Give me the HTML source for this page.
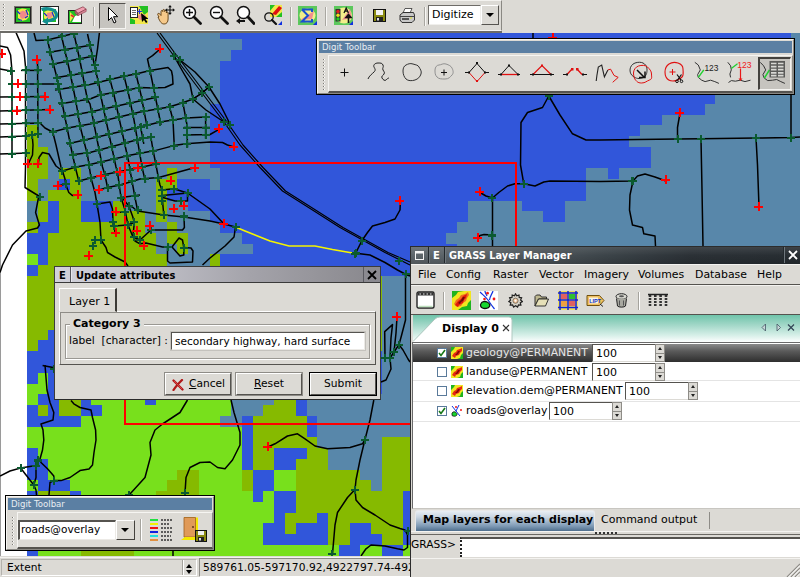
<!DOCTYPE html>
<html lang="en">
<head>
<meta charset="utf-8">
<title>GRASS GIS Map Display - digitize</title>
<style>
html,body{margin:0;padding:0}
body{width:800px;height:577px;position:relative;overflow:hidden;background:#dcdad5;font-family:"DejaVu Sans","Liberation Sans",sans-serif;font-size:10.67px;color:#000;line-height:1}
div,span{position:absolute;box-sizing:border-box;white-space:nowrap}
svg{position:absolute;display:block}
.b{font-family:"DejaVu Sans","Liberation Sans",sans-serif;font-weight:bold}
u{text-decoration:underline}
/* generic bevels */
.raised{border:1px solid;border-color:#fff #7b7974 #7b7974 #fff}
.sunken{border:1px solid;border-color:#7b7974 #fff #fff #7b7974}
.sep{width:2px;border-left:1px solid #a5a39d;border-right:1px solid #fff}
.grip{background-image:linear-gradient(transparent 1px,#dcdad5 1px),linear-gradient(90deg,#7e7c77 1px,#fff 1px,#fff 2px,transparent 2px);background-size:3px 3px}
#mapwrap{left:0;top:33px;width:800px;height:523px;overflow:hidden}
#map{left:0;top:0}
/* top toolbar */
#tb{left:0;top:0;width:800px;height:33px;background:#dcdad5}
#tbp{left:0;top:0;width:502px;height:31px;background:#dcdad5;border-top:1px solid #f4f3f0;border-right:1px solid #8a8883;border-bottom:1px solid #f6f5f2}
#tbline{left:0;top:31px;width:502px;height:2px;background:#6c6b67}
.ico{width:18px;height:18px}
.tsep{top:7px;height:19px;width:2px;border-left:1px solid #a9a7a1;border-right:1px solid #f8f7f5}
#ptr{left:99px;top:3px;width:27px;height:26px;background:#c6c4bf;border:1px solid;border-color:#55534f #f4f3f0 #f4f3f0 #55534f}
#combo{left:428px;top:5px;width:53px;height:20px;background:#fff;border:1px solid;border-color:#6e6c68 #f0efec #f0efec #6e6c68}
#combo span{left:3px;top:3px;font-size:11px}
#combob{left:481px;top:5px;width:18px;height:20px;background:#dcdad5;border:1px solid;border-color:#fff #55534f #55534f #fff}
.arr{width:0;height:0;border-left:4px solid transparent;border-right:4px solid transparent;border-top:4px solid #000}
/* digit toolbars */
.dt{background:#dcdad5;border:1px solid #000}
.dt .in{left:0;top:0;right:0;bottom:0;border:1px solid;border-color:#f6f5f2 #8a8883 #8a8883 #f6f5f2}
.dt .ttl{left:2px;top:2px;right:2px;height:12px;background:#5b7fa3;color:#e9edf2;font-size:8.6px;padding:2px 0 0 3px}
/* dialog */
#dlg{left:54px;top:266px;width:327px;height:134px;background:#dcdad5;border:1px solid #3c3c3c;border-bottom-color:#2a2a2a}
#dlgt{left:0;top:0;width:325px;height:16px;background:linear-gradient(90deg,#d2d2da 0%,#c4c4cc 25%,#a4a3aa 60%,#88878c 100%);border-bottom:1px solid #3a3a3a}
.btn{height:22px;background:#dcdad5;border:1px solid;border-color:#fff #55534f #55534f #fff;box-shadow:0 0 0 1px #8e8c87;text-align:center;padding-top:5px;font-size:10.67px}
/* layer manager */
#lm{left:410px;top:246px;width:390px;height:331px;background:#dcdad5;border-left:1px solid #2c2c2c;border-top:1px solid #2c2c2c}
#lmt{left:0;top:0;width:389px;height:18px;background:linear-gradient(rgba(255,255,255,.10),rgba(255,255,255,0) 50%,rgba(0,0,0,.15)),linear-gradient(90deg,#5e666b 0%,#565e63 22%,#3c4449 50%,#2b3136 72%,#272d32 100%);border-bottom:1px solid #20262a;color:#fff}
.mi{top:5px;font-size:10.9px}
.row{left:2px;width:387px;height:18px;border-bottom:1px solid #e4e4e4}
.cb{width:10px;height:10px;background:#fff;border:1px solid #5a7a9a;top:4px;left:24px}
.lic{width:12px;height:12px;top:3px;left:38px}
.lt{top:4px;left:53px;font-size:10.9px}
.spin{top:0;height:18px;background:#fff;border:1px solid;border-color:#55534f #dcdad5 #dcdad5 #55534f}
.spin span{left:3px;top:3px;font-size:11px;color:#000}
.spb{top:0;width:10px;height:18px;background:#dcdad5;border:1px solid #8e8c87;background-image:linear-gradient(#dcdad5 8px,#8e8c87 8px,#8e8c87 9px,#dcdad5 9px)}
.spb i{position:absolute;left:2px;top:2px;width:0;height:0;border-left:2px solid transparent;border-right:2px solid transparent;border-bottom:3px solid #222}
.spb b{position:absolute;left:2px;top:11px;width:0;height:0;border-left:2px solid transparent;border-right:2px solid transparent;border-top:3px solid #222}
</style>
</head>
<body>
<div id="mapwrap">

<svg id="map" width="800" height="523" viewBox="0 33 800 523" shape-rendering="crispEdges">
<rect x="0" y="33" width="800" height="523" fill="#fff"/>
<rect x="0" y="33" width="1" height="523" fill="#9a9a9a"/>
<rect x="26.7" y="28.4" width="194.0" height="11.1" fill="#5887aa"/>
<rect x="220.4" y="28.4" width="570.6" height="11.1" fill="#3156da"/>
<rect x="790.7" y="28.4" width="11.1" height="11.1" fill="#5887aa"/>
<rect x="26.7" y="39.2" width="215.5" height="11.1" fill="#5887aa"/>
<rect x="241.9" y="39.2" width="549.1" height="11.1" fill="#3156da"/>
<rect x="790.7" y="39.2" width="11.1" height="11.1" fill="#5887aa"/>
<rect x="26.7" y="49.9" width="204.7" height="11.1" fill="#5887aa"/>
<rect x="231.1" y="49.9" width="559.8" height="11.1" fill="#3156da"/>
<rect x="790.7" y="49.9" width="11.1" height="11.1" fill="#5887aa"/>
<rect x="26.7" y="60.7" width="194.0" height="11.1" fill="#5887aa"/>
<rect x="220.4" y="60.7" width="570.6" height="11.1" fill="#3156da"/>
<rect x="790.7" y="60.7" width="11.1" height="11.1" fill="#5887aa"/>
<rect x="26.7" y="71.4" width="194.0" height="11.1" fill="#5887aa"/>
<rect x="220.4" y="71.4" width="570.6" height="11.1" fill="#3156da"/>
<rect x="790.7" y="71.4" width="11.1" height="11.1" fill="#5887aa"/>
<rect x="26.7" y="82.2" width="194.0" height="11.1" fill="#5887aa"/>
<rect x="220.4" y="82.2" width="570.6" height="11.1" fill="#3156da"/>
<rect x="790.7" y="82.2" width="11.1" height="11.1" fill="#5887aa"/>
<rect x="26.7" y="93.0" width="194.0" height="11.1" fill="#5887aa"/>
<rect x="220.4" y="93.0" width="495.3" height="11.1" fill="#3156da"/>
<rect x="715.3" y="93.0" width="86.4" height="11.1" fill="#5887aa"/>
<rect x="26.7" y="103.7" width="183.2" height="11.1" fill="#5887aa"/>
<rect x="209.6" y="103.7" width="495.3" height="11.1" fill="#3156da"/>
<rect x="704.6" y="103.7" width="97.1" height="11.1" fill="#5887aa"/>
<rect x="26.7" y="114.5" width="183.2" height="11.1" fill="#5887aa"/>
<rect x="209.6" y="114.5" width="452.2" height="11.1" fill="#3156da"/>
<rect x="661.5" y="114.5" width="140.2" height="11.1" fill="#5887aa"/>
<rect x="26.7" y="125.2" width="11.1" height="11.1" fill="#86ba00"/>
<rect x="37.5" y="125.2" width="172.5" height="11.1" fill="#5887aa"/>
<rect x="209.6" y="125.2" width="430.7" height="11.1" fill="#3156da"/>
<rect x="640.0" y="125.2" width="161.7" height="11.1" fill="#5887aa"/>
<rect x="26.7" y="136.0" width="11.1" height="11.1" fill="#86ba00"/>
<rect x="37.5" y="136.0" width="172.5" height="11.1" fill="#5887aa"/>
<rect x="209.6" y="136.0" width="419.9" height="11.1" fill="#3156da"/>
<rect x="629.3" y="136.0" width="172.5" height="11.1" fill="#5887aa"/>
<rect x="26.7" y="146.8" width="21.8" height="11.1" fill="#86ba00"/>
<rect x="48.2" y="146.8" width="161.7" height="11.1" fill="#5887aa"/>
<rect x="209.6" y="146.8" width="441.5" height="11.1" fill="#3156da"/>
<rect x="650.8" y="146.8" width="150.9" height="11.1" fill="#5887aa"/>
<rect x="26.7" y="157.5" width="21.8" height="11.1" fill="#86ba00"/>
<rect x="48.2" y="157.5" width="161.7" height="11.1" fill="#5887aa"/>
<rect x="209.6" y="157.5" width="441.5" height="11.1" fill="#3156da"/>
<rect x="650.8" y="157.5" width="150.9" height="11.1" fill="#5887aa"/>
<rect x="26.7" y="168.3" width="21.8" height="11.1" fill="#86ba00"/>
<rect x="48.2" y="168.3" width="11.1" height="11.1" fill="#5887aa"/>
<rect x="59.0" y="168.3" width="21.8" height="11.1" fill="#86ba00"/>
<rect x="80.5" y="168.3" width="86.4" height="11.1" fill="#5887aa"/>
<rect x="166.6" y="168.3" width="11.1" height="11.1" fill="#86ba00"/>
<rect x="177.3" y="168.3" width="43.3" height="11.1" fill="#5887aa"/>
<rect x="220.4" y="168.3" width="366.1" height="11.1" fill="#3156da"/>
<rect x="586.2" y="168.3" width="21.8" height="11.1" fill="#5887aa"/>
<rect x="607.7" y="168.3" width="11.1" height="11.1" fill="#3156da"/>
<rect x="618.5" y="168.3" width="183.2" height="11.1" fill="#5887aa"/>
<rect x="26.7" y="179.0" width="11.1" height="11.1" fill="#86ba00"/>
<rect x="37.5" y="179.0" width="21.8" height="11.1" fill="#5887aa"/>
<rect x="59.0" y="179.0" width="11.1" height="11.1" fill="#3156da"/>
<rect x="69.7" y="179.0" width="11.1" height="11.1" fill="#86ba00"/>
<rect x="80.5" y="179.0" width="75.6" height="11.1" fill="#5887aa"/>
<rect x="155.8" y="179.0" width="21.8" height="11.1" fill="#86ba00"/>
<rect x="177.3" y="179.0" width="32.6" height="11.1" fill="#3156da"/>
<rect x="209.6" y="179.0" width="11.1" height="11.1" fill="#5887aa"/>
<rect x="220.4" y="179.0" width="366.1" height="11.1" fill="#3156da"/>
<rect x="586.2" y="179.0" width="215.5" height="11.1" fill="#5887aa"/>
<rect x="26.7" y="189.8" width="11.1" height="11.1" fill="#86ba00"/>
<rect x="37.5" y="189.8" width="11.1" height="11.1" fill="#5887aa"/>
<rect x="48.2" y="189.8" width="32.6" height="11.1" fill="#86ba00"/>
<rect x="80.5" y="189.8" width="75.6" height="11.1" fill="#5887aa"/>
<rect x="155.8" y="189.8" width="11.1" height="11.1" fill="#86ba00"/>
<rect x="166.6" y="189.8" width="419.9" height="11.1" fill="#3156da"/>
<rect x="586.2" y="189.8" width="215.5" height="11.1" fill="#5887aa"/>
<rect x="26.7" y="200.6" width="11.1" height="11.1" fill="#5887aa"/>
<rect x="37.5" y="200.6" width="11.1" height="11.1" fill="#86ba00"/>
<rect x="48.2" y="200.6" width="11.1" height="11.1" fill="#3156da"/>
<rect x="59.0" y="200.6" width="21.8" height="11.1" fill="#86ba00"/>
<rect x="80.5" y="200.6" width="32.6" height="11.1" fill="#3156da"/>
<rect x="112.8" y="200.6" width="11.1" height="11.1" fill="#86ba00"/>
<rect x="123.5" y="200.6" width="32.6" height="11.1" fill="#5887aa"/>
<rect x="155.8" y="200.6" width="11.1" height="11.1" fill="#86ba00"/>
<rect x="166.6" y="200.6" width="21.8" height="11.1" fill="#5887aa"/>
<rect x="188.1" y="200.6" width="280.1" height="11.1" fill="#3156da"/>
<rect x="467.9" y="200.6" width="54.1" height="11.1" fill="#5887aa"/>
<rect x="521.7" y="200.6" width="43.3" height="11.1" fill="#3156da"/>
<rect x="564.7" y="200.6" width="237.0" height="11.1" fill="#5887aa"/>
<rect x="26.7" y="211.3" width="11.1" height="11.1" fill="#5887aa"/>
<rect x="37.5" y="211.3" width="11.1" height="11.1" fill="#86ba00"/>
<rect x="48.2" y="211.3" width="11.1" height="11.1" fill="#3156da"/>
<rect x="59.0" y="211.3" width="21.8" height="11.1" fill="#86ba00"/>
<rect x="80.5" y="211.3" width="32.6" height="11.1" fill="#3156da"/>
<rect x="112.8" y="211.3" width="32.6" height="11.1" fill="#86ba00"/>
<rect x="145.1" y="211.3" width="11.1" height="11.1" fill="#5887aa"/>
<rect x="155.8" y="211.3" width="11.1" height="11.1" fill="#86ba00"/>
<rect x="166.6" y="211.3" width="43.3" height="11.1" fill="#5887aa"/>
<rect x="209.6" y="211.3" width="258.5" height="11.1" fill="#3156da"/>
<rect x="467.9" y="211.3" width="75.6" height="11.1" fill="#5887aa"/>
<rect x="543.2" y="211.3" width="21.8" height="11.1" fill="#3156da"/>
<rect x="564.7" y="211.3" width="237.0" height="11.1" fill="#5887aa"/>
<rect x="26.7" y="222.1" width="11.1" height="11.1" fill="#86ba00"/>
<rect x="37.5" y="222.1" width="21.8" height="11.1" fill="#3156da"/>
<rect x="59.0" y="222.1" width="86.4" height="11.1" fill="#86ba00"/>
<rect x="145.1" y="222.1" width="21.8" height="11.1" fill="#5887aa"/>
<rect x="166.6" y="222.1" width="11.1" height="11.1" fill="#86ba00"/>
<rect x="177.3" y="222.1" width="43.3" height="11.1" fill="#5887aa"/>
<rect x="220.4" y="222.1" width="237.0" height="11.1" fill="#3156da"/>
<rect x="457.1" y="222.1" width="344.6" height="11.1" fill="#5887aa"/>
<rect x="26.7" y="232.8" width="21.8" height="11.1" fill="#3156da"/>
<rect x="48.2" y="232.8" width="107.9" height="11.1" fill="#86ba00"/>
<rect x="155.8" y="232.8" width="11.1" height="11.1" fill="#5887aa"/>
<rect x="166.6" y="232.8" width="21.8" height="11.1" fill="#86ba00"/>
<rect x="188.1" y="232.8" width="54.1" height="11.1" fill="#5887aa"/>
<rect x="241.9" y="232.8" width="204.7" height="11.1" fill="#3156da"/>
<rect x="446.3" y="232.8" width="355.4" height="11.1" fill="#5887aa"/>
<rect x="26.7" y="243.6" width="21.8" height="11.1" fill="#3156da"/>
<rect x="48.2" y="243.6" width="107.9" height="11.1" fill="#86ba00"/>
<rect x="155.8" y="243.6" width="21.8" height="11.1" fill="#5887aa"/>
<rect x="177.3" y="243.6" width="11.1" height="11.1" fill="#86ba00"/>
<rect x="188.1" y="243.6" width="64.9" height="11.1" fill="#5887aa"/>
<rect x="252.7" y="243.6" width="204.7" height="11.1" fill="#3156da"/>
<rect x="457.1" y="243.6" width="344.6" height="11.1" fill="#5887aa"/>
<rect x="26.7" y="254.4" width="11.1" height="11.1" fill="#78e01c"/>
<rect x="37.5" y="254.4" width="11.1" height="11.1" fill="#3156da"/>
<rect x="48.2" y="254.4" width="118.7" height="11.1" fill="#86ba00"/>
<rect x="166.6" y="254.4" width="43.3" height="11.1" fill="#5887aa"/>
<rect x="209.6" y="254.4" width="11.1" height="11.1" fill="#86ba00"/>
<rect x="220.4" y="254.4" width="215.5" height="11.1" fill="#3156da"/>
<rect x="435.6" y="254.4" width="366.1" height="11.1" fill="#5887aa"/>
<rect x="26.7" y="265.1" width="11.1" height="11.1" fill="#3156da"/>
<rect x="37.5" y="265.1" width="129.4" height="11.1" fill="#86ba00"/>
<rect x="166.6" y="265.1" width="43.3" height="11.1" fill="#5887aa"/>
<rect x="209.6" y="265.1" width="11.1" height="11.1" fill="#86ba00"/>
<rect x="220.4" y="265.1" width="215.5" height="11.1" fill="#3156da"/>
<rect x="435.6" y="265.1" width="366.1" height="11.1" fill="#5887aa"/>
<rect x="26.7" y="275.9" width="355.4" height="11.1" fill="#86ba00"/>
<rect x="381.8" y="275.9" width="419.9" height="11.1" fill="#5887aa"/>
<rect x="26.7" y="286.6" width="355.4" height="11.1" fill="#86ba00"/>
<rect x="381.8" y="286.6" width="419.9" height="11.1" fill="#5887aa"/>
<rect x="26.7" y="297.4" width="355.4" height="11.1" fill="#86ba00"/>
<rect x="381.8" y="297.4" width="419.9" height="11.1" fill="#5887aa"/>
<rect x="26.7" y="308.2" width="355.4" height="11.1" fill="#86ba00"/>
<rect x="381.8" y="308.2" width="419.9" height="11.1" fill="#5887aa"/>
<rect x="26.7" y="318.9" width="355.4" height="11.1" fill="#86ba00"/>
<rect x="381.8" y="318.9" width="419.9" height="11.1" fill="#5887aa"/>
<rect x="26.7" y="329.7" width="21.8" height="11.1" fill="#86ba00"/>
<rect x="48.2" y="329.7" width="21.8" height="11.1" fill="#3156da"/>
<rect x="69.7" y="329.7" width="312.3" height="11.1" fill="#86ba00"/>
<rect x="381.8" y="329.7" width="419.9" height="11.1" fill="#5887aa"/>
<rect x="26.7" y="340.4" width="11.1" height="11.1" fill="#86ba00"/>
<rect x="37.5" y="340.4" width="32.6" height="11.1" fill="#3156da"/>
<rect x="69.7" y="340.4" width="312.3" height="11.1" fill="#86ba00"/>
<rect x="381.8" y="340.4" width="419.9" height="11.1" fill="#5887aa"/>
<rect x="26.7" y="351.2" width="355.4" height="11.1" fill="#3156da"/>
<rect x="381.8" y="351.2" width="419.9" height="11.1" fill="#5887aa"/>
<rect x="26.7" y="362.0" width="355.4" height="11.1" fill="#3156da"/>
<rect x="381.8" y="362.0" width="419.9" height="11.1" fill="#5887aa"/>
<rect x="26.7" y="372.7" width="11.1" height="11.1" fill="#3156da"/>
<rect x="37.5" y="372.7" width="11.1" height="11.1" fill="#78e01c"/>
<rect x="48.2" y="372.7" width="333.9" height="11.1" fill="#3156da"/>
<rect x="381.8" y="372.7" width="419.9" height="11.1" fill="#5887aa"/>
<rect x="26.7" y="383.5" width="21.8" height="11.1" fill="#78e01c"/>
<rect x="48.2" y="383.5" width="333.9" height="11.1" fill="#3156da"/>
<rect x="381.8" y="383.5" width="419.9" height="11.1" fill="#5887aa"/>
<rect x="26.7" y="394.2" width="11.1" height="11.1" fill="#78e01c"/>
<rect x="37.5" y="394.2" width="21.8" height="11.1" fill="#3156da"/>
<rect x="59.0" y="394.2" width="21.8" height="11.1" fill="#86ba00"/>
<rect x="80.5" y="394.2" width="11.1" height="11.1" fill="#3156da"/>
<rect x="91.3" y="394.2" width="54.1" height="11.1" fill="#78e01c"/>
<rect x="145.1" y="394.2" width="11.1" height="11.1" fill="#3156da"/>
<rect x="155.8" y="394.2" width="75.6" height="11.1" fill="#78e01c"/>
<rect x="231.1" y="394.2" width="43.3" height="11.1" fill="#5887aa"/>
<rect x="274.2" y="394.2" width="21.8" height="11.1" fill="#86ba00"/>
<rect x="295.7" y="394.2" width="11.1" height="11.1" fill="#3156da"/>
<rect x="306.5" y="394.2" width="495.3" height="11.1" fill="#5887aa"/>
<rect x="26.7" y="405.0" width="11.1" height="11.1" fill="#3156da"/>
<rect x="37.5" y="405.0" width="11.1" height="11.1" fill="#86ba00"/>
<rect x="48.2" y="405.0" width="11.1" height="11.1" fill="#3156da"/>
<rect x="59.0" y="405.0" width="21.8" height="11.1" fill="#86ba00"/>
<rect x="80.5" y="405.0" width="21.8" height="11.1" fill="#3156da"/>
<rect x="102.0" y="405.0" width="129.4" height="11.1" fill="#78e01c"/>
<rect x="231.1" y="405.0" width="32.6" height="11.1" fill="#5887aa"/>
<rect x="263.4" y="405.0" width="32.6" height="11.1" fill="#86ba00"/>
<rect x="295.7" y="405.0" width="11.1" height="11.1" fill="#3156da"/>
<rect x="306.5" y="405.0" width="495.3" height="11.1" fill="#5887aa"/>
<rect x="26.7" y="415.8" width="54.1" height="11.1" fill="#3156da"/>
<rect x="80.5" y="415.8" width="140.2" height="11.1" fill="#78e01c"/>
<rect x="220.4" y="415.8" width="21.8" height="11.1" fill="#5887aa"/>
<rect x="241.9" y="415.8" width="11.1" height="11.1" fill="#3156da"/>
<rect x="252.7" y="415.8" width="54.1" height="11.1" fill="#86ba00"/>
<rect x="306.5" y="415.8" width="11.1" height="11.1" fill="#3156da"/>
<rect x="317.2" y="415.8" width="484.5" height="11.1" fill="#5887aa"/>
<rect x="26.7" y="426.5" width="215.5" height="11.1" fill="#78e01c"/>
<rect x="241.9" y="426.5" width="11.1" height="11.1" fill="#3156da"/>
<rect x="252.7" y="426.5" width="54.1" height="11.1" fill="#86ba00"/>
<rect x="306.5" y="426.5" width="11.1" height="11.1" fill="#3156da"/>
<rect x="317.2" y="426.5" width="484.5" height="11.1" fill="#5887aa"/>
<rect x="26.7" y="437.3" width="215.5" height="11.1" fill="#78e01c"/>
<rect x="241.9" y="437.3" width="11.1" height="11.1" fill="#3156da"/>
<rect x="252.7" y="437.3" width="64.9" height="11.1" fill="#86ba00"/>
<rect x="317.2" y="437.3" width="64.9" height="11.1" fill="#5887aa"/>
<rect x="381.8" y="437.3" width="419.9" height="11.1" fill="#86ba00"/>
<rect x="26.7" y="448.0" width="11.1" height="11.1" fill="#3156da"/>
<rect x="37.5" y="448.0" width="204.7" height="11.1" fill="#78e01c"/>
<rect x="241.9" y="448.0" width="11.1" height="11.1" fill="#3156da"/>
<rect x="252.7" y="448.0" width="21.8" height="11.1" fill="#86ba00"/>
<rect x="274.2" y="448.0" width="32.6" height="11.1" fill="#3156da"/>
<rect x="306.5" y="448.0" width="21.8" height="11.1" fill="#86ba00"/>
<rect x="328.0" y="448.0" width="54.1" height="11.1" fill="#5887aa"/>
<rect x="381.8" y="448.0" width="419.9" height="11.1" fill="#86ba00"/>
<rect x="26.7" y="458.8" width="21.8" height="11.1" fill="#3156da"/>
<rect x="48.2" y="458.8" width="194.0" height="11.1" fill="#78e01c"/>
<rect x="241.9" y="458.8" width="11.1" height="11.1" fill="#3156da"/>
<rect x="252.7" y="458.8" width="21.8" height="11.1" fill="#86ba00"/>
<rect x="274.2" y="458.8" width="21.8" height="11.1" fill="#3156da"/>
<rect x="295.7" y="458.8" width="32.6" height="11.1" fill="#86ba00"/>
<rect x="328.0" y="458.8" width="54.1" height="11.1" fill="#5887aa"/>
<rect x="381.8" y="458.8" width="419.9" height="11.1" fill="#86ba00"/>
<rect x="26.7" y="469.6" width="21.8" height="11.1" fill="#3156da"/>
<rect x="48.2" y="469.6" width="129.4" height="11.1" fill="#78e01c"/>
<rect x="177.3" y="469.6" width="21.8" height="11.1" fill="#86ba00"/>
<rect x="198.9" y="469.6" width="43.3" height="11.1" fill="#78e01c"/>
<rect x="241.9" y="469.6" width="11.1" height="11.1" fill="#86ba00"/>
<rect x="252.7" y="469.6" width="21.8" height="11.1" fill="#3156da"/>
<rect x="274.2" y="469.6" width="21.8" height="11.1" fill="#78e01c"/>
<rect x="295.7" y="469.6" width="64.9" height="11.1" fill="#86ba00"/>
<rect x="360.3" y="469.6" width="21.8" height="11.1" fill="#5887aa"/>
<rect x="381.8" y="469.6" width="419.9" height="11.1" fill="#86ba00"/>
<rect x="26.7" y="480.3" width="11.1" height="11.1" fill="#78e01c"/>
<rect x="37.5" y="480.3" width="32.6" height="11.1" fill="#3156da"/>
<rect x="69.7" y="480.3" width="97.1" height="11.1" fill="#78e01c"/>
<rect x="166.6" y="480.3" width="32.6" height="11.1" fill="#86ba00"/>
<rect x="198.9" y="480.3" width="43.3" height="11.1" fill="#78e01c"/>
<rect x="241.9" y="480.3" width="11.1" height="11.1" fill="#86ba00"/>
<rect x="252.7" y="480.3" width="21.8" height="11.1" fill="#3156da"/>
<rect x="274.2" y="480.3" width="21.8" height="11.1" fill="#78e01c"/>
<rect x="295.7" y="480.3" width="75.6" height="11.1" fill="#86ba00"/>
<rect x="371.0" y="480.3" width="11.1" height="11.1" fill="#5887aa"/>
<rect x="381.8" y="480.3" width="419.9" height="11.1" fill="#86ba00"/>
<rect x="26.7" y="491.1" width="11.1" height="11.1" fill="#3156da"/>
<rect x="37.5" y="491.1" width="32.6" height="11.1" fill="#86ba00"/>
<rect x="69.7" y="491.1" width="11.1" height="11.1" fill="#3156da"/>
<rect x="80.5" y="491.1" width="75.6" height="11.1" fill="#78e01c"/>
<rect x="155.8" y="491.1" width="43.3" height="11.1" fill="#86ba00"/>
<rect x="198.9" y="491.1" width="54.1" height="11.1" fill="#78e01c"/>
<rect x="252.7" y="491.1" width="11.1" height="11.1" fill="#3156da"/>
<rect x="263.4" y="491.1" width="11.1" height="11.1" fill="#78e01c"/>
<rect x="274.2" y="491.1" width="21.8" height="11.1" fill="#3156da"/>
<rect x="295.7" y="491.1" width="107.9" height="11.1" fill="#86ba00"/>
<rect x="403.3" y="491.1" width="398.4" height="11.1" fill="#3156da"/>
<rect x="26.7" y="501.8" width="247.8" height="11.1" fill="#78e01c"/>
<rect x="274.2" y="501.8" width="21.8" height="11.1" fill="#3156da"/>
<rect x="295.7" y="501.8" width="107.9" height="11.1" fill="#86ba00"/>
<rect x="403.3" y="501.8" width="398.4" height="11.1" fill="#3156da"/>
<rect x="26.7" y="512.6" width="247.8" height="11.1" fill="#78e01c"/>
<rect x="274.2" y="512.6" width="11.1" height="11.1" fill="#3156da"/>
<rect x="284.9" y="512.6" width="32.6" height="11.1" fill="#86ba00"/>
<rect x="317.2" y="512.6" width="11.1" height="11.1" fill="#3156da"/>
<rect x="328.0" y="512.6" width="75.6" height="11.1" fill="#86ba00"/>
<rect x="403.3" y="512.6" width="398.4" height="11.1" fill="#3156da"/>
<rect x="26.7" y="523.4" width="237.0" height="11.1" fill="#78e01c"/>
<rect x="263.4" y="523.4" width="21.8" height="11.1" fill="#3156da"/>
<rect x="284.9" y="523.4" width="11.1" height="11.1" fill="#86ba00"/>
<rect x="295.7" y="523.4" width="32.6" height="11.1" fill="#3156da"/>
<rect x="328.0" y="523.4" width="21.8" height="11.1" fill="#86ba00"/>
<rect x="349.5" y="523.4" width="21.8" height="11.1" fill="#3156da"/>
<rect x="371.0" y="523.4" width="32.6" height="11.1" fill="#86ba00"/>
<rect x="403.3" y="523.4" width="398.4" height="11.1" fill="#3156da"/>
<rect x="26.7" y="534.1" width="237.0" height="11.1" fill="#78e01c"/>
<rect x="263.4" y="534.1" width="64.9" height="11.1" fill="#3156da"/>
<rect x="328.0" y="534.1" width="21.8" height="11.1" fill="#86ba00"/>
<rect x="349.5" y="534.1" width="32.6" height="11.1" fill="#3156da"/>
<rect x="381.8" y="534.1" width="21.8" height="11.1" fill="#86ba00"/>
<rect x="403.3" y="534.1" width="398.4" height="11.1" fill="#3156da"/>
<rect x="26.7" y="544.9" width="11.1" height="11.1" fill="#3156da"/>
<rect x="37.5" y="544.9" width="43.3" height="11.1" fill="#78e01c"/>
<rect x="80.5" y="544.9" width="54.1" height="11.1" fill="#86ba00"/>
<rect x="134.3" y="544.9" width="204.7" height="11.1" fill="#78e01c"/>
<rect x="338.7" y="544.9" width="21.8" height="11.1" fill="#3156da"/>
<rect x="360.3" y="544.9" width="21.8" height="11.1" fill="#78e01c"/>
<rect x="381.8" y="544.9" width="21.8" height="11.1" fill="#3156da"/>
<rect x="403.3" y="544.9" width="398.4" height="11.1" fill="#78e01c"/>
<g fill="none" stroke="#000" stroke-width="1.5" stroke-linejoin="round" shape-rendering="geometricPrecision">
<polyline points="16.0,32.5 24.0,51.0 25.6,67.5 25.5,102.0 25.5,167.0 25.0,187.5 38.8,196.0 35.6,212.5 39.4,225.0 37.5,228.0 26.0,231.0 12.5,245.0 2.5,265.0 0.0,272.5"/>
<polyline points="0.0,46.0 7.5,47.5 10.6,55.0 12.0,71.0 12.0,156.0"/>
<polyline points="0.0,69.0 11.0,71.0"/>
<polyline points="21.0,70.4 41.0,70.4"/>
<polyline points="9.0,84.0 40.0,84.0 59.0,84.0"/>
<polyline points="0.0,97.0 45.0,96.5"/>
<polyline points="0.0,111.0 50.0,109.6"/>
<polyline points="0.0,124.0 40.0,123.0 45.0,128.0 52.5,132.0 67.5,128.0 90.0,124.0 140.0,112.0 169.0,107.0 182.0,103.0 193.0,99.0 202.0,93.0 209.0,87.0"/>
<polyline points="0.0,137.0 25.0,136.0 38.0,134.0"/>
<polyline points="0.0,154.0 28.0,153.0"/>
<polyline points="37.5,60.0 38.0,134.0"/>
<polyline points="32.0,132.5 33.0,145.0 32.5,155.0 29.0,162.5 28.0,167.0"/>
<polyline points="38.0,167.0 39.0,157.5 42.5,152.5 49.0,154.0 52.5,160.0 56.0,166.0 62.5,171.0"/>
<polyline points="52.5,131.0 56.0,145.0 61.0,167.0 62.5,171.0"/>
<polyline points="34.0,33.0 36.0,40.5 47.5,40.0 77.5,32.5"/>
<polyline points="47.5,40.0 51.0,55.0 56.0,74.0 60.0,92.5 64.0,112.5 67.5,130.0 71.0,147.5 75.0,166.0 78.8,181.0"/>
<polyline points="61.0,34.0 70.0,72.5 76.0,102.0 80.0,126.0 87.5,155.0 91.0,178.0 95.0,192.5 97.0,204.0 100.0,222.5 101.0,240.0 106.0,247.5 107.5,252.5 115.0,257.0 125.0,262.0 128.0,266.0"/>
<polyline points="74.0,34.0 80.0,61.0 87.5,100.0 90.0,103.8 102.5,167.0 105.0,175.0 107.5,187.5"/>
<polyline points="87.5,34.0 95.0,67.5 99.0,85.0 101.0,97.0 116.0,167.0 117.5,172.5 121.0,197.5 125.0,210.0 128.0,225.0 133.0,237.0 140.0,240.0"/>
<polyline points="99.4,33.0 97.5,49.0 95.0,65.0"/>
<polyline points="110.0,79.4 114.0,95.0 128.8,162.5 130.0,170.0 135.0,197.5 137.5,210.0"/>
<polyline points="124.0,76.0 128.8,95.0 133.8,118.8 140.0,155.0 142.0,167.0 145.6,182.5"/>
<polyline points="136.0,74.0 141.0,95.0 147.5,128.8"/>
<polyline points="140.0,123.8 143.8,143.8"/>
<polyline points="150.0,70.6 155.0,95.0 161.0,125.0"/>
<polyline points="150.6,135.6 153.0,150.0 156.0,165.0 158.8,180.0 160.0,185.0 162.0,190.0"/>
<polyline points="168.8,104.0 173.0,120.0 174.4,148.8"/>
<polyline points="182.5,100.6 187.0,125.0 187.5,147.5"/>
<polyline points="205.6,117.0 205.6,138.8"/>
<polyline points="48.0,52.5 92.0,45.0"/>
<polyline points="51.0,64.4 94.0,56.0"/>
<polyline points="54.0,78.0 96.0,71.0"/>
<polyline points="55.0,90.0 90.0,84.4 110.0,79.4 125.0,76.0 136.0,74.0 150.0,70.6 168.0,67.5 171.5,71.0 172.5,76.0 173.0,84.0 165.0,87.5 152.5,88.0 140.0,87.5 127.5,90.0 114.0,92.5 100.0,95.0 90.0,99.0 59.0,104.0"/>
<polyline points="150.0,70.6 147.5,59.0 152.5,55.6 159.0,50.0"/>
<polyline points="62.0,117.0 90.0,112.0 157.5,97.0"/>
<polyline points="67.0,144.0 90.0,138.8 140.0,127.0 160.0,122.0 186.0,118.0 206.0,117.0"/>
<polyline points="70.0,155.0 90.0,152.5 141.0,138.8 153.0,137.0"/>
<polyline points="62.5,171.0 76.0,167.0 90.0,164.4 131.0,155.0 155.0,150.6 173.8,145.6 186.0,143.8 210.0,142.0 222.5,142.5 227.5,145.0 234.0,147.0"/>
<polyline points="78.8,181.0 102.5,175.0 127.5,170.0 142.5,167.0 156.0,164.0"/>
<polyline points="98.8,190.0 107.5,187.5 120.0,185.0 140.0,179.0 158.8,177.5 195.0,167.5"/>
<polyline points="121.0,197.5 140.0,195.0"/>
<polyline points="183.8,127.5 210.0,127.5"/>
<polyline points="183.8,135.0 210.0,134.5 219.0,129.4"/>
<polyline points="62.5,171.0 65.0,179.0 65.6,184.0 68.8,192.5 72.5,195.6 77.5,195.0"/>
<polyline points="58.0,186.0 65.6,184.0"/>
<polyline stroke-width="1.15" points="157.0,33.0 174.0,56.0 202.0,93.0 224.0,122.0 240.0,145.0 260.0,167.5 282.5,191.0 312.5,210.0 340.0,227.5 362.5,240.0 385.0,252.5 410.0,265.0"/>
<polyline stroke-width="1.15" points="160.0,33.0 177.0,56.0 205.0,93.0 227.0,122.0 243.0,145.0 263.0,167.5 285.5,191.0 315.5,210.0 343.0,227.5 365.5,240.0 388.0,252.5 410.0,262.0"/>
<polyline points="180.0,60.0 195.0,72.0 209.0,87.0 220.0,104.0 228.0,120.0 230.0,125.0"/>
<polyline points="174.0,56.0 183.0,72.0 190.0,84.0 193.0,99.0 206.0,110.0 224.0,122.0"/>
<polyline points="193.0,99.0 202.0,93.0 209.0,87.0"/>
<polyline points="354.0,253.0 370.0,255.0 385.0,262.5 397.5,270.0 406.0,274.5 410.0,276.0"/>
<polyline points="137.5,211.0 164.0,215.0 184.0,217.0 210.0,221.0 224.0,224.0 235.5,227.0"/>
<polyline points="187.5,193.0 210.0,209.0 224.0,224.0"/>
<polyline points="235.5,227.0 234.0,237.0 225.0,246.0 210.0,258.0 202.5,265.0"/>
<polyline points="162.0,190.0 162.5,201.0 163.8,215.0 164.4,219.0"/>
<polyline points="162.0,190.0 173.8,188.8 187.5,193.0 187.5,201.0 181.0,201.0 175.0,201.0 163.0,197.5"/>
<polyline points="162.5,195.6 187.5,193.0"/>
<polyline points="184.0,217.0 184.4,227.5 182.5,230.0 151.0,230.0 140.0,240.0"/>
<polyline points="122.0,197.5 128.8,206.0 132.5,207.0 137.0,211.0"/>
<polyline points="115.6,212.5 125.6,212.0"/>
<polyline points="113.0,222.0 114.4,226.0 115.0,232.5"/>
<polyline points="114.4,226.0 127.5,225.0 134.4,222.5"/>
<polyline points="128.8,206.0 132.5,216.0 134.4,222.5 133.0,235.0 135.0,241.0 140.0,243.8 146.0,243.0 162.5,247.0 172.0,247.0 179.0,238.0 182.5,240.0 183.8,247.5 183.8,255.0 180.0,256.0 172.0,247.0"/>
<polyline points="167.5,247.0 167.5,261.0 170.0,263.0 192.5,262.0 193.0,251.0 191.0,248.0 183.8,247.5"/>
<polyline points="97.0,204.0 110.0,202.0 112.5,209.0 113.0,222.0"/>
<polyline points="548.8,96.0 542.5,107.5 527.5,112.5 521.0,122.5 520.5,165.0 523.8,183.8"/>
<polyline points="548.8,96.0 560.0,115.0 572.5,133.8 586.0,140.0 600.0,140.0 637.5,139.5 677.5,139.0 701.0,138.8 756.0,138.0 791.0,137.5 800.0,137.0"/>
<polyline points="480.0,192.5 486.0,196.0 492.5,198.0 498.8,192.5 507.5,186.0 515.0,183.8 523.8,183.8 535.0,186.0 543.8,182.0 550.0,181.0 600.0,181.5 633.0,181.0 637.5,176.0 645.0,174.0 655.0,177.0 666.0,181.0"/>
<polyline points="492.5,198.0 492.5,246.0"/>
<polyline points="477.5,238.5 480.0,235.5 484.0,234.5 492.5,235.0"/>
<polyline points="791.0,94.0 791.0,137.5"/>
<polyline points="680.0,113.0 677.5,127.5 677.5,139.0"/>
<polyline points="701.0,139.0 702.0,190.0 703.0,246.0"/>
<polyline points="756.0,138.0 757.5,165.0 759.0,207.0"/>
<polyline points="633.0,181.0 630.0,195.0 629.5,210.0 632.5,225.0 642.5,227.5 643.8,233.8 655.0,236.0 655.5,246.0"/>
<polyline points="533.0,33.0 533.0,38.0"/>
<polyline points="400.5,201.0 400.0,210.0 395.0,219.0 385.0,222.5 372.5,226.0 367.5,232.5 362.0,240.5 356.0,252.5 355.0,254.0"/>
<polyline points="405.5,273.7 405.5,320.0 401.5,335.5 399.0,344.6 394.0,352.0 390.0,358.0 385.0,358.0"/>
<polyline points="397.0,317.0 396.0,333.0 394.0,352.0"/>
<polyline points="385.0,358.0 384.7,331.6 392.5,324.6 391.0,338.0 390.0,358.0 391.0,369.0 386.0,380.0 381.0,382.0"/>
<polyline points="399.0,344.6 403.0,350.0 408.0,359.0 410.0,362.0"/>
<polyline points="373.8,400.0 370.0,420.0 365.0,439.5 360.0,460.0 356.0,480.0 355.0,489.5 356.0,500.0 362.5,507.5 375.0,515.0 390.0,525.0 400.0,528.5 405.0,530.0 407.5,535.0 407.5,547.5 404.0,550.0 397.5,548.8 385.0,546.0 371.0,545.0 366.0,548.8 361.0,556.0"/>
<polyline points="355.0,489.5 347.5,497.5 337.5,512.5 335.0,525.0 332.5,553.8"/>
<polyline points="268.0,447.0 275.0,443.8 287.5,436.0 297.5,433.8 305.0,438.8 315.0,446.0 327.5,448.8 350.0,447.5 362.5,443.8 365.0,439.5"/>
<polyline points="231.0,400.0 234.0,412.5 240.0,432.5 240.0,445.0 232.5,460.0 225.0,468.8 217.5,467.5 210.0,462.0 200.0,462.5 190.0,467.5 186.0,477.5 185.0,493.0"/>
<polyline points="45.0,365.0 47.0,390.0 50.0,402.5 53.8,412.5 53.0,420.0 41.0,424.0 43.0,430.0 43.8,440.0 42.5,450.0 40.0,459.0 41.0,462.5 47.5,468.8 53.8,476.0 53.8,480.6 50.0,482.5 49.0,495.0"/>
<polyline points="42.6,365.5 53.0,367.6"/>
<polyline points="71.0,400.6 73.8,403.8 80.0,407.5 91.0,410.0 92.5,417.5 95.6,430.0 96.0,440.0 94.0,452.5 92.5,465.0 89.0,469.0 80.0,470.6 70.0,477.5 61.0,480.6 53.8,480.6"/>
<polyline points="0.0,476.0 10.0,471.0 20.6,468.0 36.0,465.6 37.5,461.0"/>
<polyline points="20.6,468.0 33.8,485.0"/>
<polyline points="36.0,462.0 36.0,477.5 33.8,485.0 36.0,490.0 36.5,495.0"/>
<polyline points="187.5,400.0 180.0,412.5 162.5,424.0 155.0,430.0 150.0,442.5 151.0,455.0 145.0,477.5 130.0,494.0 129.0,495.0"/>
<polyline points="173.0,551.0 173.0,556.0"/>
</g>
<polyline fill="none" stroke="#f4f400" stroke-width="1.700" shape-rendering="geometricPrecision" points="235.5,227 245,231 270,241 289,246 315,246 332.5,249.5 352.5,253 355,254"/>
<rect x="124.5" y="162.5" width="391" height="261.5" fill="none" stroke="#ff0000" stroke-width="2"/>
<g fill="none" stroke-width="2">
<path d="M22 70H30M26 66V74" stroke="#0b5a30"/>
<path d="M22 84H30M26 80V88" stroke="#0b5a30"/>
<path d="M22 97H30M26 93V101" stroke="#0b5a30"/>
<path d="M22 110H30M26 106V114" stroke="#0b5a30"/>
<path d="M22 123H30M26 119V127" stroke="#0b5a30"/>
<path d="M22 136H30M26 132V140" stroke="#0b5a30"/>
<path d="M22 153H30M26 149V157" stroke="#0b5a30"/>
<path d="M8 84H16M12 80V88" stroke="#0b5a30"/>
<path d="M8 97H16M12 93V101" stroke="#0b5a30"/>
<path d="M8 111H16M12 107V115" stroke="#0b5a30"/>
<path d="M8 124H16M12 120V128" stroke="#0b5a30"/>
<path d="M8 137H16M12 133V141" stroke="#0b5a30"/>
<path d="M8 154H16M12 150V158" stroke="#0b5a30"/>
<path d="M34 70H42M38 66V74" stroke="#0b5a30"/>
<path d="M34 84H42M38 80V88" stroke="#0b5a30"/>
<path d="M54 84H62M58 80V88" stroke="#0b5a30"/>
<path d="M34 97H42M38 93V101" stroke="#0b5a30"/>
<path d="M34 110H42M38 106V114" stroke="#0b5a30"/>
<path d="M34 123H42M38 119V127" stroke="#0b5a30"/>
<path d="M49 132H57M53 128V136" stroke="#0b5a30"/>
<path d="M63 128H71M67 124V132" stroke="#0b5a30"/>
<path d="M76 126H84M80 122V130" stroke="#0b5a30"/>
<path d="M90 123H98M94 119V127" stroke="#0b5a30"/>
<path d="M102 120H110M106 116V124" stroke="#0b5a30"/>
<path d="M115 117H123M119 113V121" stroke="#0b5a30"/>
<path d="M129 114H137M133 110V118" stroke="#0b5a30"/>
<path d="M140 111H148M144 107V115" stroke="#0b5a30"/>
<path d="M154 109H162M158 105V113" stroke="#0b5a30"/>
<path d="M166 107H174M170 103V111" stroke="#0b5a30"/>
<path d="M179 103H187M183 99V107" stroke="#0b5a30"/>
<path d="M205 87H213M209 83V91" stroke="#0b5a30"/>
<path d="M189 99H197M193 95V103" stroke="#0b5a30"/>
<path d="M198 93H206M202 89V97" stroke="#0b5a30"/>
<path d="M34 134H42M38 130V138" stroke="#0b5a30"/>
<path d="M28 135H36M32 131V139" stroke="#0b5a30"/>
<path d="M58 171H66M62 167V175" stroke="#0b5a30"/>
<path d="M44 40H52M48 36V44" stroke="#0b5a30"/>
<path d="M58 36H66M62 32V40" stroke="#0b5a30"/>
<path d="M46 52H54M50 48V56" stroke="#0b5a30"/>
<path d="M49 64H57M53 60V68" stroke="#0b5a30"/>
<path d="M53 78H61M57 74V82" stroke="#0b5a30"/>
<path d="M55 89H63M59 85V93" stroke="#0b5a30"/>
<path d="M58 103H66M62 99V107" stroke="#0b5a30"/>
<path d="M61 116H69M65 112V120" stroke="#0b5a30"/>
<path d="M66 143H74M70 139V147" stroke="#0b5a30"/>
<path d="M69 155H77M73 151V159" stroke="#0b5a30"/>
<path d="M71 167H79M75 163V171" stroke="#0b5a30"/>
<path d="M75 181H83M79 177V185" stroke="#0b5a30"/>
<path d="M61 50H69M65 46V54" stroke="#0b5a30"/>
<path d="M63 61H71M67 57V65" stroke="#0b5a30"/>
<path d="M67 75H75M71 71V79" stroke="#0b5a30"/>
<path d="M69 87H77M73 83V91" stroke="#0b5a30"/>
<path d="M72 101H80M76 97V105" stroke="#0b5a30"/>
<path d="M74 114H82M78 110V118" stroke="#0b5a30"/>
<path d="M80 140H88M84 136V144" stroke="#0b5a30"/>
<path d="M83 153H91M87 149V157" stroke="#0b5a30"/>
<path d="M85 165H93M89 161V169" stroke="#0b5a30"/>
<path d="M87 178H95M91 174V182" stroke="#0b5a30"/>
<path d="M93 204H101M97 200V208" stroke="#0b5a30"/>
<path d="M73 48H81M77 44V52" stroke="#0b5a30"/>
<path d="M76 59H84M80 55V63" stroke="#0b5a30"/>
<path d="M78 73H86M82 69V77" stroke="#0b5a30"/>
<path d="M81 85H89M85 81V89" stroke="#0b5a30"/>
<path d="M83 99H91M87 95V103" stroke="#0b5a30"/>
<path d="M88 112H96M92 108V116" stroke="#0b5a30"/>
<path d="M93 137H101M97 133V141" stroke="#0b5a30"/>
<path d="M95 150H103M99 146V154" stroke="#0b5a30"/>
<path d="M97 162H105M101 158V166" stroke="#0b5a30"/>
<path d="M101 175H109M105 171V179" stroke="#0b5a30"/>
<path d="M104 188H112M108 184V192" stroke="#0b5a30"/>
<path d="M86 45H94M90 41V49" stroke="#0b5a30"/>
<path d="M88 56H96M92 52V60" stroke="#0b5a30"/>
<path d="M92 71H100M96 67V75" stroke="#0b5a30"/>
<path d="M94 82H102M98 78V86" stroke="#0b5a30"/>
<path d="M97 95H105M101 91V99" stroke="#0b5a30"/>
<path d="M100 109H108M104 105V113" stroke="#0b5a30"/>
<path d="M105 134H113M109 130V138" stroke="#0b5a30"/>
<path d="M108 147H116M112 143V151" stroke="#0b5a30"/>
<path d="M110 159H118M114 155V163" stroke="#0b5a30"/>
<path d="M113 172H121M117 168V176" stroke="#0b5a30"/>
<path d="M115 185H123M119 181V189" stroke="#0b5a30"/>
<path d="M117 198H125M121 194V202" stroke="#0b5a30"/>
<path d="M136 240H144M140 236V244" stroke="#0b5a30"/>
<path d="M121 212H129M125 208V216" stroke="#0b5a30"/>
<path d="M124 225H132M128 221V229" stroke="#0b5a30"/>
<path d="M130 237H138M134 233V241" stroke="#0b5a30"/>
<path d="M106 79H114M110 75V83" stroke="#0b5a30"/>
<path d="M109 93H117M113 89V97" stroke="#0b5a30"/>
<path d="M112 106H120M116 102V110" stroke="#0b5a30"/>
<path d="M118 131H126M122 127V135" stroke="#0b5a30"/>
<path d="M121 143H129M125 139V147" stroke="#0b5a30"/>
<path d="M123 156H131M127 152V160" stroke="#0b5a30"/>
<path d="M126 170H134M130 166V174" stroke="#0b5a30"/>
<path d="M128 181H136M132 177V185" stroke="#0b5a30"/>
<path d="M131 196H139M135 192V200" stroke="#0b5a30"/>
<path d="M120 76H128M124 72V80" stroke="#0b5a30"/>
<path d="M124 90H132M128 86V94" stroke="#0b5a30"/>
<path d="M126 103H134M130 99V107" stroke="#0b5a30"/>
<path d="M131 128H139M135 124V132" stroke="#0b5a30"/>
<path d="M133 140H141M137 136V144" stroke="#0b5a30"/>
<path d="M136 153H144M140 149V157" stroke="#0b5a30"/>
<path d="M138 167H146M142 163V171" stroke="#0b5a30"/>
<path d="M141 179H149M145 175V183" stroke="#0b5a30"/>
<path d="M132 74H140M136 70V78" stroke="#0b5a30"/>
<path d="M135 88H143M139 84V92" stroke="#0b5a30"/>
<path d="M138 100H146M142 96V104" stroke="#0b5a30"/>
<path d="M143 125H151M147 121V129" stroke="#0b5a30"/>
<path d="M137 127H145M141 123V131" stroke="#0b5a30"/>
<path d="M139 138H147M143 134V142" stroke="#0b5a30"/>
<path d="M146 71H154M150 67V75" stroke="#0b5a30"/>
<path d="M150 88H158M154 84V92" stroke="#0b5a30"/>
<path d="M151 97H159M155 93V101" stroke="#0b5a30"/>
<path d="M156 122H164M160 118V126" stroke="#0b5a30"/>
<path d="M147 137H155M151 133V141" stroke="#0b5a30"/>
<path d="M149 151H157M153 147V155" stroke="#0b5a30"/>
<path d="M152 164H160M156 160V168" stroke="#0b5a30"/>
<path d="M154 178H162M158 174V182" stroke="#0b5a30"/>
<path d="M158 190H166M162 186V194" stroke="#0b5a30"/>
<path d="M169 120H177M173 116V124" stroke="#0b5a30"/>
<path d="M170 146H178M174 142V150" stroke="#0b5a30"/>
<path d="M182 118H190M186 114V122" stroke="#0b5a30"/>
<path d="M183 144H191M187 140V148" stroke="#0b5a30"/>
<path d="M183 128H191M187 124V132" stroke="#0b5a30"/>
<path d="M183 135H191M187 131V139" stroke="#0b5a30"/>
<path d="M202 117H210M206 113V121" stroke="#0b5a30"/>
<path d="M202 128H210M206 124V132" stroke="#0b5a30"/>
<path d="M202 135H210M206 131V139" stroke="#0b5a30"/>
<path d="M62 184H70M66 180V188" stroke="#0b5a30"/>
<path d="M352 253H360M356 249V257" stroke="#0b5a30"/>
<path d="M402 274H410M406 270V278" stroke="#0b5a30"/>
<path d="M220 224H228M224 220V228" stroke="#0b5a30"/>
<path d="M232 227H240M236 223V231" stroke="#0b5a30"/>
<path d="M160 215H168M164 211V219" stroke="#0b5a30"/>
<path d="M180 217H188M184 213V221" stroke="#0b5a30"/>
<path d="M184 193H192M188 189V197" stroke="#0b5a30"/>
<path d="M158 196H166M162 192V200" stroke="#0b5a30"/>
<path d="M125 206H133M129 202V210" stroke="#0b5a30"/>
<path d="M110 226H118M114 222V230" stroke="#0b5a30"/>
<path d="M109 222H117M113 218V226" stroke="#0b5a30"/>
<path d="M130 222H138M134 218V226" stroke="#0b5a30"/>
<path d="M164 247H172M168 243V251" stroke="#0b5a30"/>
<path d="M180 248H188M184 244V252" stroke="#0b5a30"/>
<path d="M545 96H553M549 92V100" stroke="#0b5a30"/>
<path d="M520 184H528M524 180V188" stroke="#0b5a30"/>
<path d="M787 138H795M791 134V142" stroke="#0b5a30"/>
<path d="M674 139H682M678 135V143" stroke="#0b5a30"/>
<path d="M697 139H705M701 135V143" stroke="#0b5a30"/>
<path d="M752 138H760M756 134V142" stroke="#0b5a30"/>
<path d="M488 198H496M492 194V202" stroke="#0b5a30"/>
<path d="M629 181H637M633 177V185" stroke="#0b5a30"/>
<path d="M488 235H496M492 231V239" stroke="#0b5a30"/>
<path d="M390 352H398M394 348V356" stroke="#0b5a30"/>
<path d="M386 358H394M390 354V362" stroke="#0b5a30"/>
<path d="M381 358H389M385 354V362" stroke="#0b5a30"/>
<path d="M395 345H403M399 341V349" stroke="#0b5a30"/>
<path d="M351 490H359M355 486V494" stroke="#0b5a30"/>
<path d="M361 440H369M365 436V444" stroke="#0b5a30"/>
<path d="M50 481H58M54 477V485" stroke="#0b5a30"/>
<path d="M17 468H25M21 464V472" stroke="#0b5a30"/>
<path d="M32 466H40M36 462V470" stroke="#0b5a30"/>
<path d="M30 485H38M34 481V489" stroke="#0b5a30"/>
<path d="M7 71H15M11 67V75" stroke="#0b5a30"/>
<path d="M70 34H78M74 30V38" stroke="#0b5a30"/>
<path d="M91 65H99M95 61V69" stroke="#0b5a30"/>
<path d="M134 210H142M138 206V214" stroke="#0b5a30"/>
<path d="M34 461H42M38 457V465" stroke="#0b5a30"/>
<path d="M170 56H178M174 52V60" stroke="#0b5a30"/>
<path d="M176 60H184M180 56V64" stroke="#0b5a30"/>
<path d="M198 93H206M202 89V97" stroke="#0b5a30"/>
<path d="M205 87H213M209 83V91" stroke="#0b5a30"/>
<path d="M189 99H197M193 95V103" stroke="#0b5a30"/>
<path d="M220 122H228M224 118V126" stroke="#0b5a30"/>
<path d="M226 125H234M230 121V129" stroke="#0b5a30"/>
<path d="M232 227H240M236 223V231" stroke="#0b5a30"/>
<path d="M351 254H359M355 250V258" stroke="#0b5a30"/>
<path d="M358 241H366M362 237V245" stroke="#0b5a30"/>
<path d="M395 261H403M399 257V265" stroke="#0b5a30"/>
<path d="M402 274H410M406 270V278" stroke="#0b5a30"/>
<path d="M395 345H403M399 341V349" stroke="#0b5a30"/>
<path d="M390 352H398M394 348V356" stroke="#0b5a30"/>
<path d="M386 358H394M390 354V362" stroke="#0b5a30"/>
<path d="M381 358H389M385 354V362" stroke="#0b5a30"/>
<path d="M361 440H369M365 436V444" stroke="#0b5a30"/>
<path d="M351 490H359M355 486V494" stroke="#0b5a30"/>
<path d="M328 554H336M332 550V558" stroke="#0b5a30"/>
<path d="M404 531H412M408 527V535" stroke="#0b5a30"/>
<path d="M545 96H553M549 92V100" stroke="#0b5a30"/>
<path d="M520 184H528M524 180V188" stroke="#0b5a30"/>
<path d="M488 198H496M492 194V202" stroke="#0b5a30"/>
<path d="M488 236H496M492 232V240" stroke="#0b5a30"/>
<path d="M628 181H636M632 177V185" stroke="#0b5a30"/>
<path d="M674 139H682M678 135V143" stroke="#0b5a30"/>
<path d="M697 139H705M701 135V143" stroke="#0b5a30"/>
<path d="M752 138H760M756 134V142" stroke="#0b5a30"/>
<path d="M787 138H795M791 134V142" stroke="#0b5a30"/>
<path d="M17 468H25M21 464V472" stroke="#0b5a30"/>
<path d="M34 460H42M38 456V464" stroke="#0b5a30"/>
<path d="M30 485H38M34 481V489" stroke="#0b5a30"/>
<path d="M50 481H58M54 477V485" stroke="#0b5a30"/>
<path d="M125 495H133M129 491V499" stroke="#0b5a30"/>
<path d="M181 493H189M185 489V497" stroke="#0b5a30"/>
<path d="M50 369H58M54 365V373" stroke="#0b5a30"/>
<path d="M91 240H99M95 236V244" stroke="#0b5a30"/>
<path d="M97 240H105M101 236V244" stroke="#0b5a30"/>
<path d="M89 246H97M93 242V250" stroke="#0b5a30"/>
<path d="M36 197H44M40 193V201" stroke="#0b5a30"/>
<path d="M147 230H155M151 226V234" stroke="#0b5a30"/>
<path d="M158 190H166M162 186V194" stroke="#0b5a30"/>
<path d="M170 189H178M174 185V193" stroke="#0b5a30"/>
<path d="M184 193H192M188 189V197" stroke="#0b5a30"/>
<path d="M158 196H166M162 192V200" stroke="#0b5a30"/>
<path d="M158 201H166M162 197V205" stroke="#0b5a30"/>
<path d="M177 201H185M181 197V205" stroke="#0b5a30"/>
<path d="M160 215H168M164 211V219" stroke="#0b5a30"/>
<path d="M180 216H188M184 212V220" stroke="#0b5a30"/>
<path d="M-2 54H6M2 49V58" stroke="#ff0000"/>
<path d="M32 60H41M37 55V64" stroke="#ff0000"/>
<path d="M13 84H22M18 79V88" stroke="#ff0000"/>
<path d="M15 97H24M20 92V101" stroke="#ff0000"/>
<path d="M40 97H49M45 92V101" stroke="#ff0000"/>
<path d="M12 111H21M17 106V115" stroke="#ff0000"/>
<path d="M45 110H54M50 105V114" stroke="#ff0000"/>
<path d="M23 164H32M28 159V168" stroke="#ff0000"/>
<path d="M33 164H42M38 159V168" stroke="#ff0000"/>
<path d="M155 49H164M160 44V53" stroke="#ff0000"/>
<path d="M53 186H62M58 181V190" stroke="#ff0000"/>
<path d="M73 195H82M78 190V199" stroke="#ff0000"/>
<path d="M96 176H105M101 171V180" stroke="#ff0000"/>
<path d="M94 190H103M99 185V194" stroke="#ff0000"/>
<path d="M115 172H124M120 167V176" stroke="#ff0000"/>
<path d="M133 168H142M138 163V172" stroke="#ff0000"/>
<path d="M111 212H120M116 207V216" stroke="#ff0000"/>
<path d="M190 168H199M195 163V172" stroke="#ff0000"/>
<path d="M166 181H175M171 176V185" stroke="#ff0000"/>
<path d="M214 129H223M219 124V133" stroke="#ff0000"/>
<path d="M229 147H238M234 142V151" stroke="#ff0000"/>
<path d="M169 209H178M174 204V213" stroke="#ff0000"/>
<path d="M179 206H188M184 201V210" stroke="#ff0000"/>
<path d="M132 231H141M137 226V235" stroke="#ff0000"/>
<path d="M145 226H154M150 221V230" stroke="#ff0000"/>
<path d="M139 246H148M144 241V250" stroke="#ff0000"/>
<path d="M111 233H120M116 228V237" stroke="#ff0000"/>
<path d="M219 224H228M224 219V228" stroke="#ff0000"/>
<path d="M395 201H404M400 196V205" stroke="#ff0000"/>
<path d="M475 192H484M480 187V196" stroke="#ff0000"/>
<path d="M473 238H482M478 233V242" stroke="#ff0000"/>
<path d="M548 38H557M553 33V42" stroke="#ff0000"/>
<path d="M675 113H684M680 108V117" stroke="#ff0000"/>
<path d="M661 180H670M666 175V184" stroke="#ff0000"/>
<path d="M754 207H763M759 202V211" stroke="#ff0000"/>
<path d="M392 317H401M397 312V321" stroke="#ff0000"/>
<path d="M263 447H272M268 442V451" stroke="#ff0000"/>
<path d="M84 256H93M89 251V260" stroke="#ff0000"/>
</g>
</svg>
</div>
<!-- ================= top toolbar ================= -->
<div id="tb">
 <div id="tbp"></div><div id="tbline"></div>
 <div class="grip" style="left:3px;top:4px;width:3px;height:24px"></div>
 <!-- display map -->
 <svg class="ico" style="left:14px;top:6px" viewBox="0 0 18 18"><rect x=".5" y=".5" width="17" height="17" fill="#d0d0d0" stroke="#77756f"/><rect x="1.500" y="1.500" width="15" height="15" fill="#22c022" stroke="#222"/><path d="M4 4l4-1.500l4 .5l3 3v5l-3 3l-5 1l-3-3z" fill="#f2e84a"/><path d="M6 6l3-1.500l3 1.500l1 3l-2 3l-3 1l-2-2z" fill="#f08a8a"/><path d="M3 5l3 3M12 4l2 5M4 13l4 1.500M11 12l3-2" stroke="#1a2ad0" stroke-width="1.300"/></svg>
 <!-- re-render -->
 <svg class="ico" style="left:40px;top:6px;width:19px;height:19px" viewBox="0 0 19 19"><rect x=".5" y=".5" width="18" height="18" fill="#fff" stroke="#222"/><rect x="3" y="3" width="13" height="13" fill="#22c022"/><path d="M4 6l4-2l5 1l2 3v4l-3 3H6l-2-3z" fill="#f2e84a"/><path d="M7 7l4-1l2 3l-2 3l-4 1z" fill="#f08a8a"/><path d="M4 7l3 3M12 6l2 5M5 14l4 1" stroke="#1a2ad0" stroke-width="1.200"/><path d="M1.500 3.500C7 1.500 16 3 16.500 8.500C17 13 11 14.500 6.500 15" fill="none" stroke="#138f8f" stroke-width="3.200"/><path d="M2 15.500l6-4v7.500z" fill="#138f8f"/></svg>
 <!-- erase -->
 <svg class="ico" style="left:68px;top:6px;width:19px;height:19px" viewBox="0 0 19 19"><rect x=".5" y="4.500" width="13" height="13" fill="#22c022" stroke="#222"/><path d="M2 6l4 4l-4 6z" fill="#f2e84a"/><path d="M4 16l3-6l6-2v8z" fill="#fff"/><path d="M3 9l3 2" stroke="#e03030" stroke-width="2"/><path d="M7 4.500L15 .8l3.200 2.400L10 7.500z" fill="#f0a0b0" stroke="#803040" stroke-width=".7"/><path d="M7 4.500l3 3v2.200l-3-2.700z" fill="#b06070" stroke="#803040" stroke-width=".5"/><path d="M10 7.500l8.200-4.300v2.300L10 9.700z" fill="#d88898" stroke="#803040" stroke-width=".5"/></svg>
 <div class="tsep" style="left:93px"></div>
 <div id="ptr"></div>
 <svg class="ico" style="left:107px;top:6px;width:12px;height:19px" viewBox="0 0 12 19"><path d="M1.500 1.500v13l3-3l2.500 5.500l2-1l-2.500-5.300h4.200z" fill="#fff" stroke="#000" stroke-width="1"/></svg>
 <!-- query -->
 <svg class="ico" style="left:130px;top:6px" viewBox="0 0 18 18"><rect width="18" height="18" fill="#f2e84a"/><path d="M9 0h9v6l-4 3zM0 12l5 2v4H0z" fill="#22c022"/><ellipse cx="12" cy="11" rx="4" ry="3" fill="#f08a8a"/><rect x=".5" y="1.500" width="7" height="10" fill="#fff" stroke="#222"/><path d="M2 4.500h4M2 6.500h4M2 8.500h4" stroke="#444" stroke-width=".8"/><path d="M11 7l1 9l2-2l2 3l1.500-1l-2-3h3z" fill="#000"/><path d="M9.500 3v5M7 5.500h5" stroke="#2030e0" stroke-width="1.200"/></svg>
 <!-- pan -->
 <svg class="ico" style="left:156px;top:5px;width:19px;height:20px" viewBox="0 0 19 20"><path d="M3 12c-1-2-2-3-1-3.500s2 .5 3 2V6.500c0-1.400 1.800-1.400 1.800 0V5.500c0-1.400 1.800-1.400 1.800 0v1c0-1.400 1.800-1.400 1.800 0v1.500c0-1.300 1.700-1.300 1.700 0V14c0 3-1.500 5-4 5s-4-2-6.100-7z" fill="#f6c98a" stroke="#5a3a10" stroke-width=".9"/><path d="M14 1.500v7M10.500 5h7" stroke="#111" stroke-width="1.100" fill="none"/><path d="M14 0l-1.800 2.200h3.600zM14 10l-1.800-2.200h3.600zM9 5l2.200-1.800v3.600zM19 5l-2.200-1.800v3.600z" fill="#111"/></svg>
 <!-- zoom in -->
 <svg class="ico" style="left:182px;top:5px;width:20px;height:20px" viewBox="0 0 20 20"><circle cx="7.500" cy="7.500" r="6" fill="#fdfdfd" stroke="#111" stroke-width="1.500"/><path d="M4 7.500h7M7.500 4v7" stroke="#111" stroke-width="1.400"/><path d="M12 12l6.500 6.500" stroke="#111" stroke-width="2.800" stroke-linecap="round"/></svg>
 <!-- zoom out -->
 <svg class="ico" style="left:209px;top:5px;width:20px;height:20px" viewBox="0 0 20 20"><circle cx="7.500" cy="7.500" r="6" fill="#fdfdfd" stroke="#111" stroke-width="1.500"/><path d="M4 7.500h7" stroke="#111" stroke-width="1.400"/><path d="M12 12l6.500 6.500" stroke="#111" stroke-width="2.800" stroke-linecap="round"/></svg>
 <!-- zoom back -->
 <svg class="ico" style="left:235px;top:5px;width:20px;height:20px" viewBox="0 0 20 20"><circle cx="8.500" cy="7.500" r="6" fill="#fdfdfd" stroke="#111" stroke-width="1.500"/><path d="M13 12l6 6.500" stroke="#111" stroke-width="2.800" stroke-linecap="round"/><path d="M1 16l4-3v2h5v2H5v2z" fill="#111"/></svg>
 <!-- zoom menu -->
 <svg class="ico" style="left:263px;top:5px;width:20px;height:20px" viewBox="0 0 20 20"><rect x="7" y="0" width="12" height="12" fill="#f2e84a"/><path d="M7 0h5l-5 6zM19 12h-6l6-5z" fill="#22c022"/><path d="M9 9l7-8l3 2l-6 7z" fill="#e01010"/><circle cx="6" cy="12" r="4.200" fill="none" stroke="#111" stroke-width="1.300"/><path d="M9 15l4 4" stroke="#111" stroke-width="2.200" stroke-linecap="round"/><path d="M19 16v4h-4z" fill="#1030e0"/></svg>
 <div class="tsep" style="left:290px"></div>
 <!-- analyze (sigma) -->
 <svg class="ico" style="left:298px;top:6px;width:19px;height:19px" viewBox="0 0 19 19"><rect width="19" height="19" fill="#5cc85c"/><ellipse cx="9.500" cy="9.500" rx="8" ry="7" fill="#f2ee8a"/><path d="M2 14l14-9l-2 8z" fill="#f09090"/><path d="M4 3.500h10v2.500M4 3.500l6 6l-6 6h10v-2.500" fill="none" stroke="#1a50d0" stroke-width="2"/><path d="M19 15v4h-4z" fill="#1030e0"/></svg>
 <div class="tsep" style="left:325px"></div>
 <!-- overlay -->
 <svg class="ico" style="left:334px;top:6px;width:19px;height:19px" viewBox="0 0 19 19"><rect width="19" height="19" fill="#5cc85c"/><ellipse cx="10" cy="9.500" rx="8" ry="8" fill="#f2ee8a"/><path d="M8 14l8-11l2 9z" fill="#f09090"/><rect x="1.500" y="3" width="5" height="12.500" fill="#333"/><circle cx="4" cy="5.500" r="1.700" fill="#e02020"/><circle cx="4" cy="9.200" r="1.700" fill="#f0e020"/><circle cx="4" cy="13" r="1.700" fill="#20d020"/><path d="M10 7l2.200-5l2.200 5M10.800 5.200h2.800" stroke="#111" stroke-width="1.300" fill="none"/><path d="M14.500 17v-7M12 11.500l2.500-3l2.500 3z" stroke="#111" stroke-width="1.600" fill="#111"/><path d="M19 15v4h-4z" fill="#1030e0"/></svg>
 <div class="tsep" style="left:361px"></div>
 <!-- save -->
 <svg class="ico" style="left:373px;top:9px;width:13px;height:13px" viewBox="0 0 13 13"><rect x=".5" y=".5" width="12" height="12" fill="#8a8a10" stroke="#111"/><rect x="3" y="1" width="7" height="5" fill="#f4f4f4"/><rect x="3" y="8" width="7" height="4.500" fill="#222"/><rect x="4" y="9" width="2" height="2.500" fill="#ddd"/></svg>
 <!-- print -->
 <svg class="ico" style="left:399px;top:8px;width:16px;height:15px" viewBox="0 0 16 15"><path d="M4 5l2-4.500h7L11 5z" fill="#fff" stroke="#333" stroke-width=".8"/><path d="M1 7l3-2.500h10.500L15.500 7v5l-2.500 2.500H3L1 12z" fill="#c8c8c8" stroke="#222" stroke-width=".9"/><path d="M1 8.500h14.500" stroke="#444"/><rect x="3" y="10" width="7" height="2" fill="#555"/><rect x="11" y="9.500" width="2" height="1" fill="#e0e020"/></svg>
 <div class="tsep" style="left:424px"></div>
 <div id="combo"><span>Digitize</span></div>
 <div id="combob"><div class="arr" style="left:4px;top:7px"></div></div>
</div>

<!-- ================= digit toolbar (top) ================= -->
<div class="dt" style="left:316px;top:38px;width:479px;height:57px">
 <div class="in"></div>
 <div class="ttl">Digit Toolbar</div>
 <div class="grip" style="left:6px;top:20px;width:3px;height:31px"></div>
 <div style="left:11px;top:16px;width:465px;height:38px;border:1px solid;border-color:#f6f5f2 #8a8883 #55534f #f6f5f2;border-bottom-width:2px"></div>
 <div style="left:441px;top:18px;width:33px;height:33px;background:#c6c4bf;border:1px solid;border-color:#44423e #f4f3f0 #f4f3f0 #44423e;border-left-width:2px;border-top-width:2px"></div>
 <svg style="left:12px;top:17px" width="462" height="35" viewBox="329 56 462 35" fill="none" stroke-width="1">
  <!-- point --><path d="M340.500 72.500h8M344.500 68.500v8" stroke="#111"/>
  <!-- line --><path d="M368 79c1-3 4-5 6-7s1-3 0-5s1-4 4-4s4 0 5 2s-1 3 0 5s2 2 1 4s-3 2-2 4s3 3 4 2s2-2 3-2" stroke="#222" stroke-width="1"/>
  <!-- boundary --><path d="M403 71c0-3 1-5 3-6s4-2 7-1s5 1 6 3s3 4 2 7s-3 5-6 6s-7 1-9-1s-3-5-3-8z" stroke="#333" stroke-width="1"/>
  <!-- centroid --><path d="M435 70c0-3 2-5 4-5s4-2 7-1s5 2 6 4s2 5 0 7s-3 4-7 4s-6 0-8-2s-2-4-2-7z" stroke="#888" stroke-width=".9"/><path d="M441 72.500h6M444 69.500v6" stroke="#111"/>
  <!-- move vertex --><path d="M465 72.500h4M485 72.500h4M469 72.500l8-9l8 9" stroke="#111"/><path d="M469 72.500l8 9l8-9" stroke="#e01010"/><path d="M476 62h2v2h-2zM468 71.500h2v2h-2zM484 71.500h2v2h-2z" fill="#111" stroke="none"/><path d="M476 80h2v2h-2z" fill="#e01010" stroke="none"/>
  <!-- add vertex --><path d="M498 74.500h22M501 74.500l8-9l9 9" stroke="#111"/><path d="M501 74.500h17" stroke="#e01010" stroke-width="1.300"/><path d="M500 73.500h2v2h-2zM517 73.500h2v2h-2zM508 64.500h2v2h-2z" fill="#111" stroke="none"/>
  <!-- remove vertex --><path d="M530 74.500h24" stroke="#111"/><path d="M533 74.500l9-9l9 9" stroke="#e01010" stroke-width="1.200"/><path d="M532 73.500h2v2h-2zM550 73.500h2v2h-2z" fill="#111" stroke="none"/><path d="M541 64.500h2v2h-2z" fill="#e01010" stroke="none"/>
  <!-- split --><path d="M563 74.500h4M582 74.500h5" stroke="#111"/><path d="M567 74.500l5-5.500M577 69l5 5.500" stroke="#e01010" stroke-width="1.300"/><path d="M566 73.500h2v2h-2zM582 73.500h2v2h-2z" fill="#111" stroke="none"/><path d="M571 68h2.500v2.500H571zM576 68h2.500v2.500H576z" fill="#e01010" stroke="none"/>
  <!-- edit line --><path d="M596.200 81l.7-5.500l1.400-8.400l3.400-2l2.700 11.700l3.500-6.900" stroke="#222" stroke-width="1.100"/><path d="M607.900 69.900l2.700-.7l3.400 6.200l4.200 2l-5.500 4.900" stroke="#e01010"/>
  <!-- move line --><path d="M630 70c0-3 2-6 5-7s6-1 8 0s4 3 4 6s0 6-3 8s-7 2-10 0s-4-4-4-7z" stroke="#333"/><path d="M633.500 73c0-3 2-6 5-7s7-1 9 1s4 4 4 7s1 5-2 6s-4 3-8 3s-5-2-6-3s-2-4-2-7z" stroke="#e01010"/><path d="M637 70l7 7M645 71.500v6h-6" stroke="#111" stroke-width="1.500"/>
  <!-- delete line --><path d="M665 72c0-3 1-6 4-8s6-2 9-1s5 3 5 6s1 6-1 8s-5 4-9 4s-6-2-7-4s-1-3-1-5z" stroke="#e01010" stroke-width="1.100"/><path d="M669.500 72h6M672.500 69v6" stroke="#e01010"/><path d="M677 74.500l4 5.500M681.500 74.500l-4 5.500" stroke="#111" stroke-width="1.200"/><circle cx="677" cy="81.300" r="1.300" stroke="#111"/><circle cx="681.500" cy="81.300" r="1.300" stroke="#111"/>
  <!-- display cats --><path d="M694.800 62.300l3.500 2.700l2 4.900l-2.700 4.800l.7 2.700l3.400 2.800l3.400 1.400l5.500-1.400l4.200 1.400l4.100 1.800" stroke="#333"/><path d="M698.300 77.400l5.500-7.500" stroke="#20d030" stroke-width="1.500"/>
  <!-- copy cats --><path d="M727.800 62.300l2.800 3.500l.7 4.100l-1.400 4.100l.7 3.400M728.500 82.500l2.800-1.900l4.100.6l4.800-1l4.800 1.400l5.500-1.400" stroke="#333"/><path d="M731.300 68.500l6.200-4.800" stroke="#20d030" stroke-width="1.300"/><path d="M740.500 68.500v10.500" stroke="#e81818" stroke-width="1.200"/><path d="M738.500 78.500h4l-2 2.500z" fill="#e81818" stroke="none"/>
  <!-- attributes --><path d="M760.200 62.300l3.400 3.500l2.100 4.100l-2.800 4.800l1.400 3.400l3.400 2.500l4.800-.4l4.200-.7l4.100 2.100l4.100 1.800" stroke="#333"/><path d="M764.300 78.100l5.200-8.200" stroke="#20d030" stroke-width="1.600"/><rect x="769.500" y="61" width="15.500" height="16.500" fill="#5a5a58" stroke="none"/><path d="M771 63.500h5.500M778 63.500h5.500M771 66.600h5.500M778 66.600h5.500M771 69.700h5.500M778 69.700h5.500M771 72.800h5.500M778 72.800h5.500M771 75.700h5.500M778 75.700h5.500" stroke="#d8d8d4" stroke-width="1.700"/>
  <text x="704.400" y="70.600" font-family="Liberation Sans, sans-serif" font-size="8.400" fill="#222" stroke="none">123</text>
  <text x="737.300" y="67.600" font-family="Liberation Sans, sans-serif" font-size="8.600" fill="#f02020" stroke="none">123</text>
 </svg>
</div>

<!-- ================= update attributes dialog ================= -->
<div id="dlg">
 <div id="dlgt">
  <span class="b" style="left:4px;top:4px;font-size:10px">E</span>
  <div style="left:15px;top:0;width:2px;height:15px;border-left:1px solid #55555a;border-right:1px solid #e6e6ec"></div>
  <span class="b" style="left:21px;top:4px;font-size:9.9px">Update attributes</span>
  <div style="left:308px;top:0;width:17px;height:15px;background:#8b8a90;border-left:1px solid #5a5a60"></div>
  <svg style="left:312px;top:3px" width="10" height="10" viewBox="0 0 10 10"><path d="M1 1l8 8M9 1l-8 8" stroke="#000" stroke-width="1.800"/></svg>
 </div>
 <!-- notebook -->
 <div style="left:4px;top:44px;width:317px;height:54px;border:1px solid;border-color:#fff #55534f #55534f #fff;box-shadow:1px 1px 0 #8e8c87 inset"></div>
 <div style="left:4px;top:21px;width:58px;height:24px;background:#dcdad5;border:1px solid;border-color:#fff #3c3a36 transparent #fff;border-right-width:2px"></div>
 <span style="left:14px;top:29px;font-size:11px">Layer 1</span>
 <!-- group box -->
 <div style="left:10px;top:57px;width:305px;height:35px;border:1px solid #9a9893;box-shadow:1px 1px 0 #fff inset,1px 1px 0 #fff"></div>
 <span class="b" style="left:15px;top:51px;font-size:11px;background:#dcdad5;padding:0 3px">Category 3</span>
 <span style="left:14px;top:69px;font-size:10.67px">label&nbsp; [character] :</span>
 <div style="left:116px;top:65px;width:194px;height:18px;background:#fff;border:1px solid;border-color:#55534f #eceae6 #eceae6 #55534f;box-shadow:0 0 0 1px #c4c2bd"></div>
 <span style="left:120px;top:69px;font-size:10.55px">secondary highway, hard surface</span>
 <!-- buttons -->
 <div class="btn" style="left:110px;top:106px;width:66px;padding-left:18px"><u>C</u>ancel</div>
 <svg style="left:117px;top:112px" width="12" height="12" viewBox="0 0 12 12"><path d="M1.500 1.500C4 4 7 7 10.500 10.500M10 1C7 4 4 7 1.500 11" stroke="#b01818" stroke-width="2.300" stroke-linecap="round" fill="none"/><path d="M2 2l8 8" stroke="#e05050" stroke-width=".8"/></svg>
 <div class="btn" style="left:181px;top:106px;width:66px"><u>R</u>eset</div>
 <div class="btn" style="left:255px;top:106px;width:66px;box-shadow:0 0 0 1px #000">Submit</div>
</div>

<!-- ================= digit toolbar (bottom) ================= -->
<div class="dt" style="left:5px;top:495px;width:210px;height:56px">
 <div class="in"></div>
 <div class="ttl">Digit Toolbar</div>
 <div class="grip" style="left:6px;top:21px;width:3px;height:29px"></div>
 <div style="left:11px;top:16px;width:196px;height:37px;border:1px solid;border-color:#f6f5f2 #8a8883 #55534f #f6f5f2;border-bottom-width:2px"></div>
 <div style="left:12px;top:24px;width:98px;height:20px;background:#fff;border:1px solid;border-color:#55534f #eceae6 #eceae6 #55534f;border-top-width:2px;border-left-width:2px"></div>
 <span style="left:15px;top:28px;font-size:10.6px">roads@overlay</span>
 <div style="left:110px;top:24px;width:19px;height:20px;background:#dcdad5;border:1px solid;border-color:#fff #44423e #44423e #fff"><div class="arr" style="left:4px;top:7px"></div></div>
 <div class="sep" style="left:134px;top:23px;height:22px"></div>
 <svg style="left:143px;top:22px" width="25" height="24" viewBox="0 0 25 24"><g stroke-width="2"><path d="M1 2h8" stroke="#20e040"/><path d="M1 6h8" stroke="#f4f000"/><path d="M1 10h8" stroke="#f01010"/><path d="M1 14h8" stroke="#1020e0"/><path d="M1 18h8" stroke="#20e0e0"/><path d="M1 22h8" stroke="#e09040"/></g><g stroke="#333" stroke-width="1.600" stroke-dasharray="2 1"><path d="M12 2h11M12 6h9M12 10h11M12 14h11M12 18h10M12 22h11"/></g></svg>
 <svg style="left:175px;top:20px" width="26" height="27" viewBox="0 0 26 27"><path d="M3 1.500h14v20H3z" fill="#f4e800"/><path d="M3 1.500h11.500v19.500H3z" fill="#e09a58" stroke="#a06020" stroke-width=".8"/><path d="M0 24l4-3h13v3z" fill="#f4e800"/><circle cx="12" cy="11" r=".9" fill="#503010"/><rect x="14.500" y="14.500" width="11" height="11" fill="#8a8a10" stroke="#111"/><rect x="17" y="15" width="6" height="4" fill="#f0f0f0"/><rect x="17" y="21" width="6" height="4.500" fill="#222"/><rect x="18" y="22" width="2" height="2.500" fill="#ddd"/></svg>
</div>

<!-- ================= status bar ================= -->
<div style="left:0;top:556px;width:410px;height:21px;background:#dcdad5"></div><div style="left:0;top:557px;width:410px;height:1px;background:#f4f3f0"></div><div style="left:1px;top:559px;width:196px;height:17px;border:1px solid;border-color:#b4b2ad #fff #fff #b4b2ad"></div>
<span style="left:7px;top:563px;font-size:10.67px">Extent</span>
<div class="sep" style="left:182px;top:560px;height:15px"></div>
<div class="arr" style="left:186px;top:570px;border-left-width:3px;border-right-width:3px"></div>
<div class="arr" style="left:186px;top:564px;border-left-width:3px;border-right-width:3px;border-top:0;border-bottom:4px solid #000"></div>
<div style="left:199px;top:558px;width:260px;height:19px;border:1px solid;border-color:#8e8c87 #fff #fff #8e8c87"></div>
<span style="left:203px;top:563px;font-size:10.67px;letter-spacing:.02px">589761.05-597170.92,4922797.74-4928463.05</span>

<!-- ================= layer manager ================= -->
<div id="lm">
 <div id="lmt">
  <svg style="left:4px;top:4px" width="10" height="10" viewBox="0 0 10 10"><rect x=".5" y=".5" width="8" height="8" fill="none" stroke="#f4f4f4" stroke-width="1"/><rect x="0" y="0" width="9" height="2.500" fill="#f4f4f4"/></svg>
  <div style="left:17px;top:0;width:2px;height:16px;border-left:1px solid #23292d;border-right:1px solid #6f777d"></div>
  <span class="b" style="left:22px;top:4px;font-size:10px">E</span>
  <div style="left:33px;top:0;width:2px;height:16px;border-left:1px solid #23292d;border-right:1px solid #6f777d"></div>
  <span class="b" style="left:38px;top:4px;font-size:9.8px">GRASS Layer Manager</span>
  <div style="left:372px;top:0;width:2px;height:16px;border-left:1px solid #23292d;border-right:1px solid #6f777d"></div>
  <svg style="left:377px;top:3px" width="10" height="10" viewBox="0 0 10 10"><path d="M1 1l8 8M9 1l-8 8" stroke="#fff" stroke-width="1.800"/></svg>
 </div>
 <!-- menubar -->
 <div style="left:0;top:17px;width:389px;height:21px;border-top:1px solid #f4f3f0;border-bottom:1px solid #55534f"></div>
 <span class="mi" style="left:7px;top:23px">File</span>
 <span class="mi" style="left:35px;top:23px">Config</span>
 <span class="mi" style="left:82px;top:23px">Raster</span>
 <span class="mi" style="left:128px;top:23px">Vector</span>
 <span class="mi" style="left:173px;top:23px">Imagery</span>
 <span class="mi" style="left:227px;top:23px">Volumes</span>
 <span class="mi" style="left:284px;top:23px">Database</span>
 <span class="mi" style="left:346px;top:23px">Help</span>
 <!-- toolbar -->
 <div style="left:0;top:38px;width:389px;height:30px;border-top:1px solid #f4f3f0;border-bottom:1px solid #55534f"></div>
 <svg style="left:5px;top:44px" width="20" height="19" viewBox="0 0 20 19"><rect x="1" y="1" width="17" height="16" rx="1.500" fill="#fff" stroke="#222" stroke-width="1.400"/><rect x="1.500" y="1.500" width="16" height="3" fill="#333"/><path d="M3.500 3h1.500M7 3h1.500M10.500 3H12M14 3h1.500" stroke="#eee"/><path d="M2.500 15.500h14" stroke="#bde0bd" stroke-width="1.500"/></svg>
 <div class="sep" style="left:32px;top:45px;height:18px"></div>
 <svg style="left:41px;top:44px" width="19" height="19" viewBox="0 0 19 19"><rect width="19" height="19" fill="#1fb41f"/><path d="M0 7l4-3l2-3l6-1h7v9l-3 3l-1 3l-5 1l-4 3H0z" fill="#f2e620"/><path d="M2 13l2-4l3-2l2-3l4-1l3-2l1 3l-2 3l-1 3l-3 2l-2 3l-4 1z" fill="#f07020"/><path d="M3 14l3-4l3-2l2-3l4-2l-1 4l-2 2l-1 3l-4 2l-1 2z" fill="#e01808"/><path d="M6 12l3-3l2-3l2 0l-2 4l-2 1l-1 2z" fill="#700808"/></svg>
 <svg style="left:68px;top:44px" width="19" height="19" viewBox="0 0 19 19"><rect width="19" height="19" fill="#fff"/><path d="M1 1c3 3 6 5 8 8s4 6 6.500 9M14 0c-1 3-3 5-3.500 9M6 0c0 2 1 3 2 5" stroke="#1030e0" stroke-width="1.200" fill="none"/><circle cx="8.500" cy="2.200" r="1.400" fill="#f01818"/><circle cx="15" cy="8" r="1.400" fill="#f01818"/><circle cx="5.500" cy="8" r="1.300" fill="#f01818"/><path d="M2 12.500c1-2 4-2.500 6-1.500s3.500 2.500 2.500 4.500s-5 2.500-7 1.500s-2.500-3-1.500-4.500z" fill="#18d830" stroke="#111" stroke-width="1.300"/></svg>
 <svg style="left:97px;top:46px" width="15" height="15" viewBox="0 0 15 15"><path d="M7.500 .8l1.200 2l2.300-.8l.2 2.400l2.400.4l-1 2.200l1.800 1.600l-2.100 1.100l.6 2.400l-2.400-.2l-.9 2.200l-2-1.400l-2 1.400l-1-2.200l-2.400.2l.7-2.400l-2.100-1.100l1.800-1.600l-1-2.200l2.400-.4l.2-2.400l2.300.8z" fill="#d8d4c8" stroke="#222" stroke-width="1.200"/><circle cx="7.500" cy="7.700" r="2.600" fill="#f0c090" stroke="#555" stroke-width=".7"/><circle cx="7.500" cy="7.700" r="1.100" fill="#fff"/></svg>
 <svg style="left:123px;top:47px" width="15" height="13" viewBox="0 0 15 13"><path d="M1 12V2.500l1.500-1.500h3.500l1.500 2h5V5H4.500L1 12z" fill="#bdb78f" stroke="#222" stroke-width=".9"/><path d="M1 12l3.500-7H14.500l-3 7z" fill="#e6e0b8" stroke="#222" stroke-width=".9"/></svg>
 <svg style="left:147px;top:44px" width="20" height="19" viewBox="0 0 20 19"><rect width="20" height="19" fill="#f0e060"/><path d="M0 0h20v19H0z" fill="none"/><rect x="3" y="3" width="6" height="5" fill="#e06060"/><rect x="11" y="10" width="6" height="5" fill="#e06060"/><rect x="11" y="3" width="6" height="5" fill="#30c030"/><rect x="3" y="10" width="6" height="5" fill="#f0a040"/><path d="M2 0v19M10 0v19M18 0v19M0 2h20M0 9h20M0 16.500h20" stroke="#1020d8" stroke-width="1.500"/></svg>
 <svg style="left:175px;top:47px" width="19" height="13" viewBox="0 0 19 13"><path d="M1 1.500h12.500l4.500 5l-4.500 5H1z" fill="#f0c060" stroke="#705010" stroke-width="1"/><rect x="3" y="3.500" width="9" height="6" fill="#f8f4e8"/><text x="3.200" y="8.800" font-family="Liberation Sans, sans-serif" font-size="5.500" font-weight="bold" fill="#1030c0">LIPT</text><path d="M14 10l3 2.500" stroke="#222"/></svg>
 <svg style="left:204px;top:46px" width="13" height="15" viewBox="0 0 13 15"><ellipse cx="6.500" cy="3.500" rx="5.500" ry="2.800" fill="#d8d8d0" stroke="#222" stroke-width="1"/><path d="M1.500 5.500l1 7.500c1 1.500 7 1.500 8 0l1-7.500" fill="#a8a8a0" stroke="#222" stroke-width="1"/><path d="M4.500 7.500v5M8.500 7.500v5" stroke="#555"/><ellipse cx="6.500" cy="3.300" rx="2.500" ry="1" fill="#555"/></svg>
 <div class="sep" style="left:227px;top:45px;height:18px"></div>
 <svg style="left:237px;top:46px" width="20" height="14" viewBox="0 0 20 14"><g stroke="#333" stroke-width="2.600" stroke-dasharray="2 1"><path d="M2 2v12M7.300 2v12M12.600 2v12M18 2v12"/></g><path d="M0 1.500h20" stroke="#222" stroke-width="1.500"/></svg>
 <!-- notebook header -->
 <div style="left:2px;top:68px;width:387px;height:27px;background:linear-gradient(#6fc4aa,#9fd6c6 35%,#d6efe8 75%,#fdfefe)"></div>
 <svg style="left:2px;top:68px" width="110" height="27" viewBox="0 0 110 27"><path d="M0 27L22 4q2-2 5-2H96q3 0 3 3V27z" fill="#fff"/><path d="M0 26.500L22 4q2-2 5-2H96q3 0 3 3V27" fill="none" stroke="#b0c8c0" stroke-width="1"/></svg>
 <span class="b" style="left:31px;top:76px;font-size:11px">Display 0</span>
 <svg style="left:91px;top:77px" width="8" height="8" viewBox="0 0 8 8"><path d="M1 1l6 6M7 1l-6 6" stroke="#333" stroke-width="1.100"/></svg>
 <svg style="left:349px;top:76px" width="36" height="9" viewBox="0 0 36 9"><path d="M5.500 1v7l-3.500-3.500z" fill="#c8d8d8" stroke="#456" stroke-width=".8"/><path d="M17 1v7l3.500-3.500z" fill="#c8d8d8" stroke="#456" stroke-width=".8"/><path d="M28 1.500l6 6M34 1.500l-6 6" stroke="#345" stroke-width="1.200"/></svg>
 <!-- tree -->
 <div style="left:1px;top:95px;width:388px;height:167px;background:#fff;border-top:1px solid #6a6a6a;border-left:1px solid #6a6a6a;border-bottom:1px solid #c8c6c1"></div>
 <div class="row" style="top:97px;background:linear-gradient(#8a8a8a,#5a5a5a 40%,#2e2e2e);border-bottom:0;height:18px">
  <div class="cb"></div><svg style="left:25px;top:5px" width="8" height="8" viewBox="0 0 8 8"><path d="M1 4l2 2.500L7 1" stroke="#187818" stroke-width="1.600" fill="none"/></svg>
  <svg class="lic" viewBox="0 0 12 12"><rect width="12" height="12" fill="#1fb41f"/><path d="M0 5l3-3l1-2h8v6l-2 2l-1 3l-3 1H0z" fill="#f2e620"/><path d="M1 9l2-3l2-1l1-2l3-1l2-1v3l-2 2l-1 2l-3 1l-1 2z" fill="#e82810"/><path d="M4 8l2-2l1-2h2l-2 3l-1 1z" fill="#800808"/></svg>
  <span class="lt" style="color:#e6e6e6">geology@PERMANENT</span>
  <div class="spin" style="left:179px;width:64px"><span>100</span></div><div class="spb" style="left:242px"><i></i><b></b></div>
 </div>
 <div class="row" style="top:116px">
  <div class="cb"></div>
  <svg class="lic" viewBox="0 0 12 12"><rect width="12" height="12" fill="#1fb41f"/><path d="M0 5l3-3l1-2h8v6l-2 2l-1 3l-3 1H0z" fill="#f2e620"/><path d="M1 9l2-3l2-1l1-2l3-1l2-1v3l-2 2l-1 2l-3 1l-1 2z" fill="#e82810"/><path d="M4 8l2-2l1-2h2l-2 3l-1 1z" fill="#800808"/></svg>
  <span class="lt">landuse@PERMANENT</span>
  <div class="spin" style="left:179px;width:64px"><span>100</span></div><div class="spb" style="left:242px"><i></i><b></b></div>
 </div>
 <div class="row" style="top:135px;height:20px">
  <div class="cb"></div>
  <svg class="lic" viewBox="0 0 12 12"><rect width="12" height="12" fill="#1fb41f"/><path d="M0 5l3-3l1-2h8v6l-2 2l-1 3l-3 1H0z" fill="#f2e620"/><path d="M1 9l2-3l2-1l1-2l3-1l2-1v3l-2 2l-1 2l-3 1l-1 2z" fill="#e82810"/><path d="M4 8l2-2l1-2h2l-2 3l-1 1z" fill="#800808"/></svg>
  <span class="lt">elevation.dem@PERMANENT</span>
  <div class="spin" style="left:212px;width:64px"><span>100</span></div><div class="spb" style="left:275px"><i></i><b></b></div>
 </div>
 <div class="row" style="top:155px;height:20px">
  <div class="cb"></div><svg style="left:25px;top:5px" width="8" height="8" viewBox="0 0 8 8"><path d="M1 4l2 2.500L7 1" stroke="#187818" stroke-width="1.600" fill="none"/></svg>
  <svg class="lic" viewBox="0 0 12 12"><rect width="12" height="12" fill="#fff"/><path d="M1 1l8 10M8 0l-3 6" stroke="#1030e0" stroke-width="1"/><circle cx="5" cy="2" r="1" fill="#f01818"/><circle cx="10" cy="5" r="1" fill="#f01818"/><path d="M1 8c1-1.500 3-1.500 4-.5s1.500 2 .5 3s-3 1-4.500 0z" fill="#18d830" stroke="#111" stroke-width=".8"/></svg>
  <span class="lt">roads@overlay</span>
  <div class="spin" style="left:136px;width:64px"><span>100</span></div><div class="spb" style="left:199px"><i></i><b></b></div>
 </div>
 <!-- bottom tabs -->
  <div style="left:4px;top:263px;width:180px;height:21px;background:linear-gradient(#e9eef3,#c9d5e1 30%,#7f9bb6 75%,#4f6e8c);border-radius:3px 3px 0 0;border:1px solid #e8e8e8;border-bottom:0"></div>
 <span class="b" style="left:12px;top:267px;font-size:11px">Map layers for each display</span>
 <span style="left:190px;top:267px;font-size:11px">Command output</span>
 <div style="left:298px;top:265px;width:1px;height:17px;background:#8e8c87"></div>
 <div style="left:0;top:284px;width:389px;height:1px;background:#f4f3f0"></div><div style="left:0;top:287px;width:389px;height:1px;background:#6a6863"></div>
 <div style="left:184px;top:285px;width:24px;height:2px;background-image:linear-gradient(90deg,#333 2px,transparent 2px);background-size:4px 2px"></div>
 <span style="left:0;top:293px;font-size:10.67px">GRASS&gt;</span>
 <div style="left:49px;top:290px;width:340px;height:20px;background:#fff;border-top:2px solid #55534f;border-left:2px dotted #222"></div>
 <div style="left:0;top:311px;width:389px;height:1px;background:#f4f3f0"></div>
 <svg style="left:374px;top:315px" width="15" height="15" viewBox="0 0 15 15"><path d="M15 2L2 15M15 6l-9 9M15 10l-5 5" stroke="#8e8c87" stroke-width="1.200"/><path d="M15 3.500L3.500 15M15 7.500l-7.500 7.500M15 11.500l-3.500 3.500" stroke="#fff" stroke-width="1"/></svg>
</div>
</body>
</html>
